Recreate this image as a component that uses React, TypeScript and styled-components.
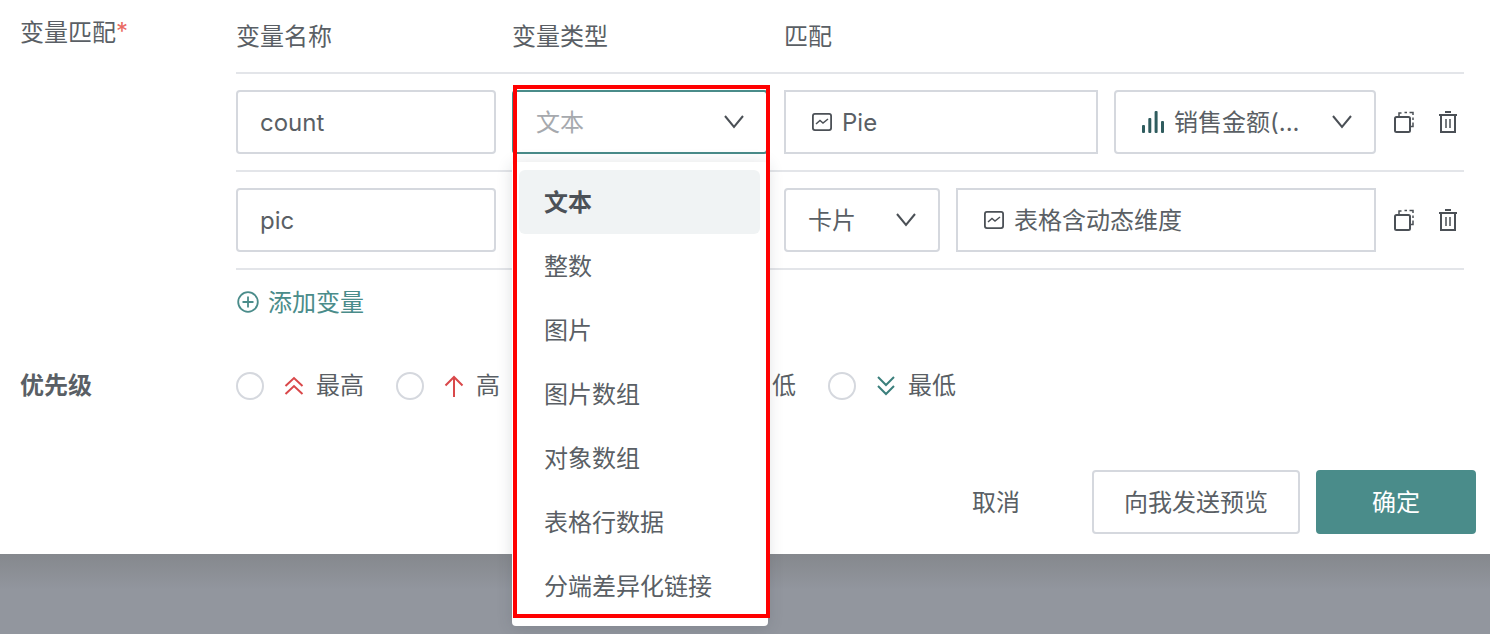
import styled, { createGlobalStyle } from "styled-components";

const GlobalStyle = createGlobalStyle`
  html, body {
    margin: 0;
    padding: 0;
    height: 634px;
    overflow: hidden;
    background: #92969e;
    font-family: Inter, "Noto Sans CJK SC", sans-serif;
  }
`;

const Page = styled.div`
  width: 1490px;
  height: 634px;
`;

const Panel = styled.div`
  box-sizing: border-box;
  height: 554px;
  padding: 16px 14px 20px 20px;
  background: #fff;
  color: #5a5f65;
  font-size: 24px;
  line-height: 32px;
`;

const Backdrop = styled.div`
  height: 80px;
  background: linear-gradient(#85888d 0, #92969e 36px);
`;

const Field = styled.div`
  display: flex;
`;

const Label = styled.div<{ $bold?: boolean }>`
  box-sizing: border-box;
  width: 216px;
  flex: none;
  padding-top: ${(p) => (p.$bold ? 0 : 1)}px;
  font-weight: ${(p) => (p.$bold ? 700 : 400)};
`;

const Star = styled.span`
  color: #ea6a62;
  font-size: 24px;
  line-height: 18px;
  vertical-align: 1px;
`;

const Content = styled.div`
  width: 1228px;
`;

const HeaderRow = styled.div`
  box-sizing: border-box;
  display: flex;
  gap: 16px;
  height: 58px;
  padding-top: 5px;
  border-bottom: 2px solid #e3e5e9;
`;

const HeaderCell = styled.div<{ $width: number }>`
  width: ${(p) => p.$width}px;
`;

const VarRow = styled.div`
  display: flex;
  align-items: center;
  gap: 16px;
  padding: 16px 0;
  border-bottom: 2px solid #e3e5e9;
`;

const Box = styled.div<{ $width: number; $focus?: boolean; $square?: boolean }>`
  box-sizing: border-box;
  width: ${(p) => p.$width}px;
  height: 64px;
  flex: none;
  display: flex;
  align-items: center;
  justify-content: space-between;
  padding: 0 22px;
  background: #fff;
  border: 2px solid ${(p) => (p.$focus ? "#4a8c8a" : "#d5d8de")};
  border-radius: ${(p) => (p.$square ? 0 : 4)}px;
`;

const TargetBox = styled(Box)`
  justify-content: flex-start;
  gap: 10px;
  padding: 0 26px;
`;

const Value = styled.span`
  padding-top: 2px;
  white-space: nowrap;
`;

const Placeholder = styled(Value)`
  color: #a6a9ae;
`;

const Name = styled.span`
  display: flex;
  align-items: center;
  gap: 10px;
  margin-left: 4px;
  white-space: nowrap;
`;

const TypeCell = styled.div`
  position: relative;
  width: 256px;
  height: 64px;
  flex: none;
`;

const Menu = styled.div`
  position: absolute;
  z-index: 5;
  top: calc(100% + 8px);
  left: 0;
  box-sizing: border-box;
  width: 256px;
  height: 464px;
  padding: 8px 8px 8px 7px;
  background: #fff;
  border-radius: 4px;
  box-shadow: 0 2px 16px rgba(40, 50, 60, 0.16);
`;

const MenuItem = styled.div<{ $active?: boolean }>`
  box-sizing: border-box;
  height: 64px;
  display: flex;
  align-items: center;
  padding: 2px 0 0 25px;
  border-radius: 6px;
  background: ${(p) => (p.$active ? "#f0f3f4" : "transparent")};
  font-weight: ${(p) => (p.$active ? 700 : 400)};
  color: ${(p) => (p.$active ? "#4c5157" : "#5a5f65")};
`;

const Highlight = styled.div`
  position: absolute;
  z-index: 6;
  top: -5px;
  left: 1px;
  box-sizing: border-box;
  width: 257px;
  height: 533px;
  border: 4px solid #ff0000;
  pointer-events: none;
`;

const Actions = styled.div`
  display: flex;
  gap: 24px;
  margin-left: 2px;
`;

const AddVar = styled.div`
  display: flex;
  align-items: center;
  gap: 9px;
  height: 32px;
  margin-top: 16px;
  padding-left: 1px;
  color: #4a8c8a;
`;

const PriorityField = styled(Field)`
  margin-top: 52px;
`;

const PriorityList = styled.div`
  display: flex;
  gap: 32px;
`;

const PriorityItem = styled.div`
  display: flex;
  align-items: center;
`;

const PriorityText = styled.span<{ $width: number }>`
  width: ${(p) => p.$width}px;
`;

const Radio = styled.span`
  box-sizing: border-box;
  width: 28px;
  height: 28px;
  border: 2px solid #d5d8de;
  border-radius: 50%;
  margin-right: 20px;
`;

const PriorityIcon = styled.span`
  display: flex;
  width: 20px;
  margin-right: 12px;
`;

const Footer = styled.div`
  display: flex;
  justify-content: flex-end;
  gap: 16px;
  margin-top: 68px;
`;

const Button = styled.button<{ $kind: "text" | "outline" | "primary" }>`
  box-sizing: border-box;
  height: 64px;
  width: ${(p) => (p.$kind === "outline" ? 208 : 160)}px;
  border: 2px solid
    ${(p) => (p.$kind === "primary" ? "#4a8c8a" : p.$kind === "outline" ? "#d5d8de" : "transparent")};
  border-radius: 4px;
  background: ${(p) => (p.$kind === "primary" ? "#4a8c8a" : "#fff")};
  color: ${(p) => (p.$kind === "primary" ? "#fff" : "#5a5f65")};
  font: inherit;
  padding: 2px 0 0;
`;

const Chevron = () => (
  <svg width="20" height="14" viewBox="0 0 20 14" fill="none" stroke="#4b5056" strokeWidth="2">
    <path d="M1 1l9 11 9-11" />
  </svg>
);

const ChartBox = () => (
  <svg width="20" height="18" viewBox="0 0 20 18" fill="none" stroke="#4b5056" strokeWidth="1.8">
    <rect x="0.9" y="0.9" width="18.2" height="16.2" rx="2" />
    <path d="M4 11l4-3.5 3 2.5 5-4" strokeWidth="1.5" />
  </svg>
);

const Bars = () => (
  <svg width="22" height="22" viewBox="0 0 22 22" fill="#2f5c5e">
    <rect x="0" y="14" width="3" height="8" rx="1" />
    <rect x="6.3" y="7" width="3" height="15" rx="1" />
    <rect x="12.6" y="0" width="3" height="22" rx="1" />
    <rect x="19" y="10" width="3" height="12" rx="1" />
  </svg>
);

const CopyIcon = () => (
  <svg width="20" height="22" viewBox="0 0 20 22" fill="none" stroke="#4b5056" strokeWidth="2">
    <rect x="1" y="6" width="15" height="15" rx="1.5" />
    <path d="M5 5V2h2.5M10.5 1.5H13M15.5 1.5H19V4M19 6.5V9M19 11.5V15.5H17" strokeWidth="1.5" />
  </svg>
);

const TrashIcon = () => (
  <svg width="20" height="22" viewBox="0 0 20 22" fill="none" stroke="#4b5056" strokeWidth="2">
    <path d="M7 1h6M1 4h18M3 4v17h14V4" />
    <path d="M8 8v9M12 8v9" strokeWidth="1.5" />
  </svg>
);

const PlusCircle = () => (
  <svg width="22" height="22" viewBox="0 0 22 22" fill="none" stroke="#4a8c8a" strokeWidth="1.8">
    <circle cx="11" cy="11" r="9.8" />
    <path d="M11 5.5v11M5.5 11h11" />
  </svg>
);

const DoubleUp = () => (
  <svg width="20" height="20" viewBox="0 0 20 20" fill="none" stroke="#d9484a" strokeWidth="2">
    <path d="M1.5 10L10 2l8.5 8M1.5 18L10 10l8.5 8" />
  </svg>
);

const Up = () => (
  <svg width="20" height="22" viewBox="0 0 20 22" fill="none" stroke="#d9484a" strokeWidth="2">
    <path d="M1.5 10.5L10 2l8.5 8.5M10 2v20" />
  </svg>
);

const Down = () => (
  <svg width="20" height="22" viewBox="0 0 20 22" fill="none" stroke="#3b7f7c" strokeWidth="2">
    <path d="M2 12l8 8 8-8M10 20V0" />
  </svg>
);

const DoubleDown = () => (
  <svg width="20" height="20" viewBox="0 0 20 20" fill="none" stroke="#3b7f7c" strokeWidth="2">
    <path d="M2 1l8 8 8-8M2 10l8 8 8-8" />
  </svg>
);

const menuItems = ["文本", "整数", "图片", "图片数组", "对象数组", "表格行数据", "分端差异化链接"];

// the third option sits under the open dropdown, so only its width counts
const priorities = [
  { label: "最高", width: 48, icon: <DoubleUp /> },
  { label: "高", width: 24, icon: <Up /> },
  { label: "", width: 48, icon: <Down /> },
  { label: "低", width: 24, icon: <Down /> },
  { label: "最低", width: 48, icon: <DoubleDown /> },
];

function RowActions() {
  return (
    <Actions>
      <CopyIcon />
      <TrashIcon />
    </Actions>
  );
}

export default function App() {
  return (
    <Page>
      <GlobalStyle />
      <Panel>
        <Field>
          <Label>
            变量匹配<Star>*</Star>
          </Label>
          <Content>
            <HeaderRow>
              <HeaderCell $width={260}>变量名称</HeaderCell>
              <HeaderCell $width={256}>变量类型</HeaderCell>
              <HeaderCell $width={200}>匹配</HeaderCell>
            </HeaderRow>

            <VarRow>
              <Box $width={260}>
                <Value>count</Value>
              </Box>
              <TypeCell>
                <Box $width={256} $focus>
                  <Placeholder>文本</Placeholder>
                  <Chevron />
                </Box>
                <Menu>
                  {menuItems.map((item, index) => (
                    <MenuItem key={item} $active={index === 0}>
                      {item}
                    </MenuItem>
                  ))}
                </Menu>
                <Highlight />
              </TypeCell>
              <TargetBox $width={314} $square>
                <ChartBox />
                <Value>Pie</Value>
              </TargetBox>
              <Box $width={262}>
                <Name>
                  <Bars />
                  <Value>销售金额(...</Value>
                </Name>
                <Chevron />
              </Box>
              <RowActions />
            </VarRow>

            <VarRow>
              <Box $width={260}>
                <Value>pic</Value>
              </Box>
              <TypeCell />
              <Box $width={156}>
                <Value>卡片</Value>
                <Chevron />
              </Box>
              <TargetBox $width={420} $square>
                <ChartBox />
                <Value>表格含动态维度</Value>
              </TargetBox>
              <RowActions />
            </VarRow>

            <AddVar>
              <PlusCircle />
              <Value>添加变量</Value>
            </AddVar>
          </Content>
        </Field>

        <PriorityField>
          <Label $bold>优先级</Label>
          <PriorityList>
            {priorities.map((item, index) => (
              <PriorityItem key={index}>
                <Radio />
                <PriorityIcon>{item.icon}</PriorityIcon>
                <PriorityText $width={item.width}>{item.label}</PriorityText>
              </PriorityItem>
            ))}
          </PriorityList>
        </PriorityField>

        <Footer>
          <Button $kind="text">取消</Button>
          <Button $kind="outline">向我发送预览</Button>
          <Button $kind="primary">确定</Button>
        </Footer>
      </Panel>
      <Backdrop />
    </Page>
  );
}
